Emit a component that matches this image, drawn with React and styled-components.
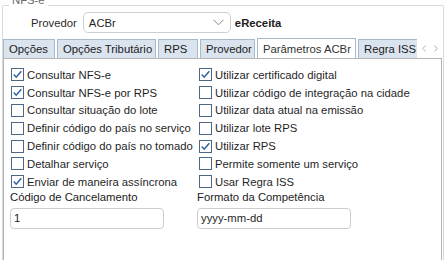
import React from "react";
import styled, { createGlobalStyle } from "styled-components";

const GlobalStyle = createGlobalStyle`
  body {
    margin: 0;
    background: #ffffff;
    font-family: "Liberation Sans", Arial, sans-serif;
    font-size: 11.3px;
    color: #1f1f1f;
  }
`;

const Group = styled.div`
  position: relative;
  margin: 5px 1px 0 2px;
  height: 270px;
  border: 1px solid #d9d9d9;
  border-bottom: none;
  border-radius: 2px 2px 0 0;
`;

const Legend = styled.span`
  position: absolute;
  left: 6px;
  top: -13px;
  padding: 0 3px;
  background: #ffffff;
  color: #6a6a6a;
  line-height: 14px;
`;

const ProviderRow = styled.div`
  display: flex;
  align-items: center;
  height: 21px;
  padding: 6px 0 0 28px;
`;

const Label = styled.span`
  color: #2a2a2a;
  margin-right: 6px;
`;

const Select = styled.div`
  box-sizing: border-box;
  display: flex;
  align-items: center;
  justify-content: space-between;
  width: 148px;
  height: 21px;
  padding: 0 6px 0 5px;
  border: 1px solid #cfcfcf;
  border-radius: 5px;
  background: #ffffff;
`;

const ProviderName = styled.span`
  margin-left: 4px;
  font-weight: bold;
  color: #202020;
`;

const TabBar = styled.div`
  display: flex;
  align-items: flex-end;
  margin: 4px 1px 0 0;
  height: 21px;
`;

const TabStrip = styled.div`
  flex: 1;
  display: flex;
  align-items: flex-end;
  overflow: hidden;
  height: 21px;
`;

const Tab = styled.div`
  box-sizing: border-box;
  flex: none;
  position: relative;
  width: ${(p) => p.$w}px;
  height: ${(p) => (p.$active ? 21 : 20)}px;
  margin-right: 2px;
  padding-left: 5px;
  display: flex;
  align-items: center;
  white-space: nowrap;
  overflow: hidden;
  border: 1px solid #a9b9cc;
  border-bottom: ${(p) => (p.$active ? "1px solid #ffffff" : "1px solid #a9b9cc")};
  margin-bottom: -1px;
  z-index: ${(p) => (p.$active ? 1 : 0)};
  background: ${(p) => (p.$active ? "#ffffff" : "#dae4ef")};
  color: ${(p) => (p.$active ? "#333333" : "#1a1a1a")};
`;

const Arrows = styled.div`
  width: 25px;
  height: 20px;
  display: flex;
  align-items: center;
  justify-content: space-between;
  padding: 0 4px 0 5px;
  box-sizing: border-box;
`;

const Panel = styled.div`
  margin-right: 1px;
  height: 220px;
  border: 1px solid #b4b4b4;
  background: #ffffff;
  padding: 7px 0 0 7px;
`;

const Checks = styled.div`
  display: grid;
  grid-template-columns: 188px 1fr;
  grid-auto-rows: 17.8px;
`;

const CheckRow = styled.div`
  display: flex;
  align-items: center;
  white-space: nowrap;
`;

const Box = styled.span`
  box-sizing: border-box;
  flex: none;
  width: 13px;
  height: 13px;
  margin-right: 3px;
  border: 1px solid #4d6785;
  background: #ffffff;
  display: flex;
  align-items: center;
  justify-content: center;
`;

const Fields = styled.div`
  display: grid;
  grid-template-columns: 187px 1fr;
  margin: 0 0 0 -1px;
`;

const Field = styled.div`
  display: flex;
  flex-direction: column;
`;

const FieldLabel = styled.span`
  line-height: 13px;
  margin-bottom: 4px;
  color: #222222;
`;

const Input = styled.div`
  box-sizing: border-box;
  width: 154px;
  height: 21px;
  padding-left: 3px;
  display: flex;
  align-items: center;
  border: 1px solid #cdcdcd;
  border-radius: 4px;
  background: #ffffff;
`;

function Check({ checked, children }) {
  return (
    <CheckRow>
      <Box>
        {checked && (
          <svg width="11" height="11" viewBox="0 0 11 11">
            <polyline
              points="1.8,5.6 4.2,8.2 9.3,2.2"
              fill="none"
              stroke="#2d62a8"
              strokeWidth="1.5"
            />
          </svg>
        )}
      </Box>
      {children}
    </CheckRow>
  );
}

const tabs = [
  { label: "Opções", w: 52 },
  { label: "Opções Tributário", w: 99 },
  { label: "RPS", w: 40 },
  { label: "Provedor", w: 55 },
  { label: "Parâmetros ACBr", w: 99, active: true },
  { label: "Regra ISS", w: 70 },
];

const left = [
  ["Consultar NFS-e", true],
  ["Consultar NFS-e por RPS", true],
  ["Consultar situação do lote", false],
  ["Definir código do país no serviço", false],
  ["Definir código do país no tomado", false],
  ["Detalhar serviço", false],
  ["Enviar de maneira assíncrona", true],
];

const right = [
  ["Utilizar certificado digital", true],
  ["Utilizar código de integração na cidade", false],
  ["Utilizar data atual na emissão", false],
  ["Utilizar lote RPS", false],
  ["Utilizar RPS", true],
  ["Permite somente um serviço", false],
  ["Usar Regra ISS", false],
];

export default function App() {
  return (
    <>
      <GlobalStyle />
      <Group>
        <Legend>NFS-e</Legend>
        <ProviderRow>
          <Label>Provedor</Label>
          <Select>
            <span>ACBr</span>
            <svg width="11" height="7" viewBox="0 0 11 7">
              <polyline points="0.5,0.8 5.5,5.8 10.5,0.8" fill="none" stroke="#8a8a8a" strokeWidth="1" />
            </svg>
          </Select>
          <ProviderName>eReceita</ProviderName>
        </ProviderRow>
        <TabBar>
          <TabStrip>
            {tabs.map((t) => (
              <Tab key={t.label} $w={t.w} $active={t.active}>
                {t.label}
              </Tab>
            ))}
          </TabStrip>
          <Arrows>
            <svg width="4" height="7" viewBox="0 0 4 7">
              <polyline points="3.5,0.5 0.8,3.5 3.5,6.5" fill="none" stroke="#b3b3b3" strokeWidth="1" />
            </svg>
            <svg width="4" height="7" viewBox="0 0 4 7">
              <polyline points="0.5,0.5 3.2,3.5 0.5,6.5" fill="none" stroke="#b3b3b3" strokeWidth="1" />
            </svg>
          </Arrows>
        </TabBar>
        <Panel>
          <Checks>
            {left.map(([text, on], i) => (
              <React.Fragment key={text}>
                <Check checked={on}>{text}</Check>
                <Check checked={right[i][1]}>{right[i][0]}</Check>
              </React.Fragment>
            ))}
          </Checks>
          <Fields>
            <Field>
              <FieldLabel>Código de Cancelamento</FieldLabel>
              <Input>1</Input>
            </Field>
            <Field>
              <FieldLabel>Formato da Competência</FieldLabel>
              <Input>yyyy-mm-dd</Input>
            </Field>
          </Fields>
        </Panel>
      </Group>
    </>
  );
}
